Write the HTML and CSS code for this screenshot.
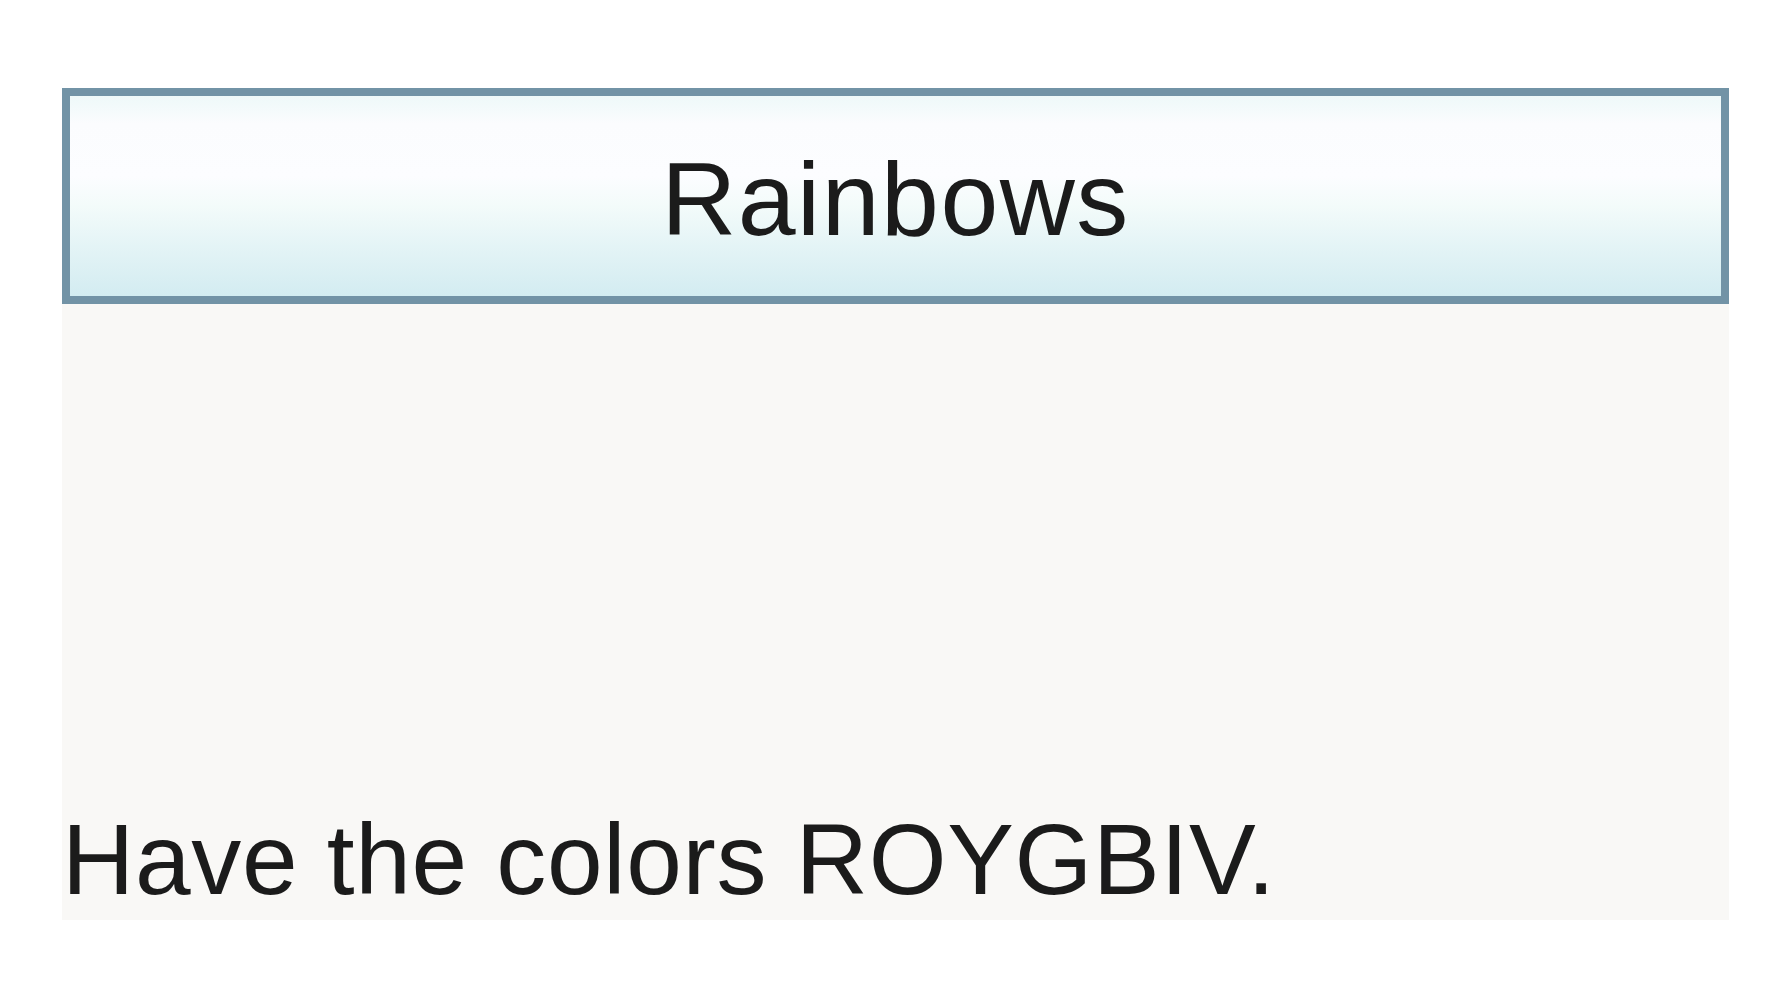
FILE: index.html
```html
<!DOCTYPE html>
<html>
<head>
<meta charset="utf-8">
<link rel="stylesheet" href="styles.css">
</head>
<body>
<div class="panel">
  <div class="header"><span class="title">Rainbows</span></div>
  <div class="content"><p class="text">Have the colors ROYGBIV.</p></div>
</div>
</body>
</html>
```
FILE: styles.css
```css
html, body {
  margin: 0;
  padding: 0;
  background: #ffffff;
}
body {
  font-family: "Liberation Sans", Arial, sans-serif;
  color: #1b1b1b;
}
.panel {
  margin: 88px 0 0 62px;
  width: 1667px;
}
.header {
  box-sizing: border-box;
  height: 216px;
  border: 8px solid #7293a6;
  background: linear-gradient(to bottom, #eef9f9 0%, #fbfcfe 14%, #fcfdff 40%, #f3fbfa 55%, #e4f4f6 75%, #d3ecf1 100%);
  display: flex;
  align-items: center;
  justify-content: center;
}
.title {
  font-size: 104px;
  line-height: 1;
  padding-top: 6px;
  letter-spacing: 1.5px;
}
.content {
  box-sizing: border-box;
  height: 616px;
  background: #f9f8f6;
  display: flex;
  align-items: flex-end;
  padding-bottom: 3px;
}
.text {
  margin: 0;
  font-size: 100px;
  line-height: 115px;
  letter-spacing: 0.7px;
  white-space: nowrap;
}
```
